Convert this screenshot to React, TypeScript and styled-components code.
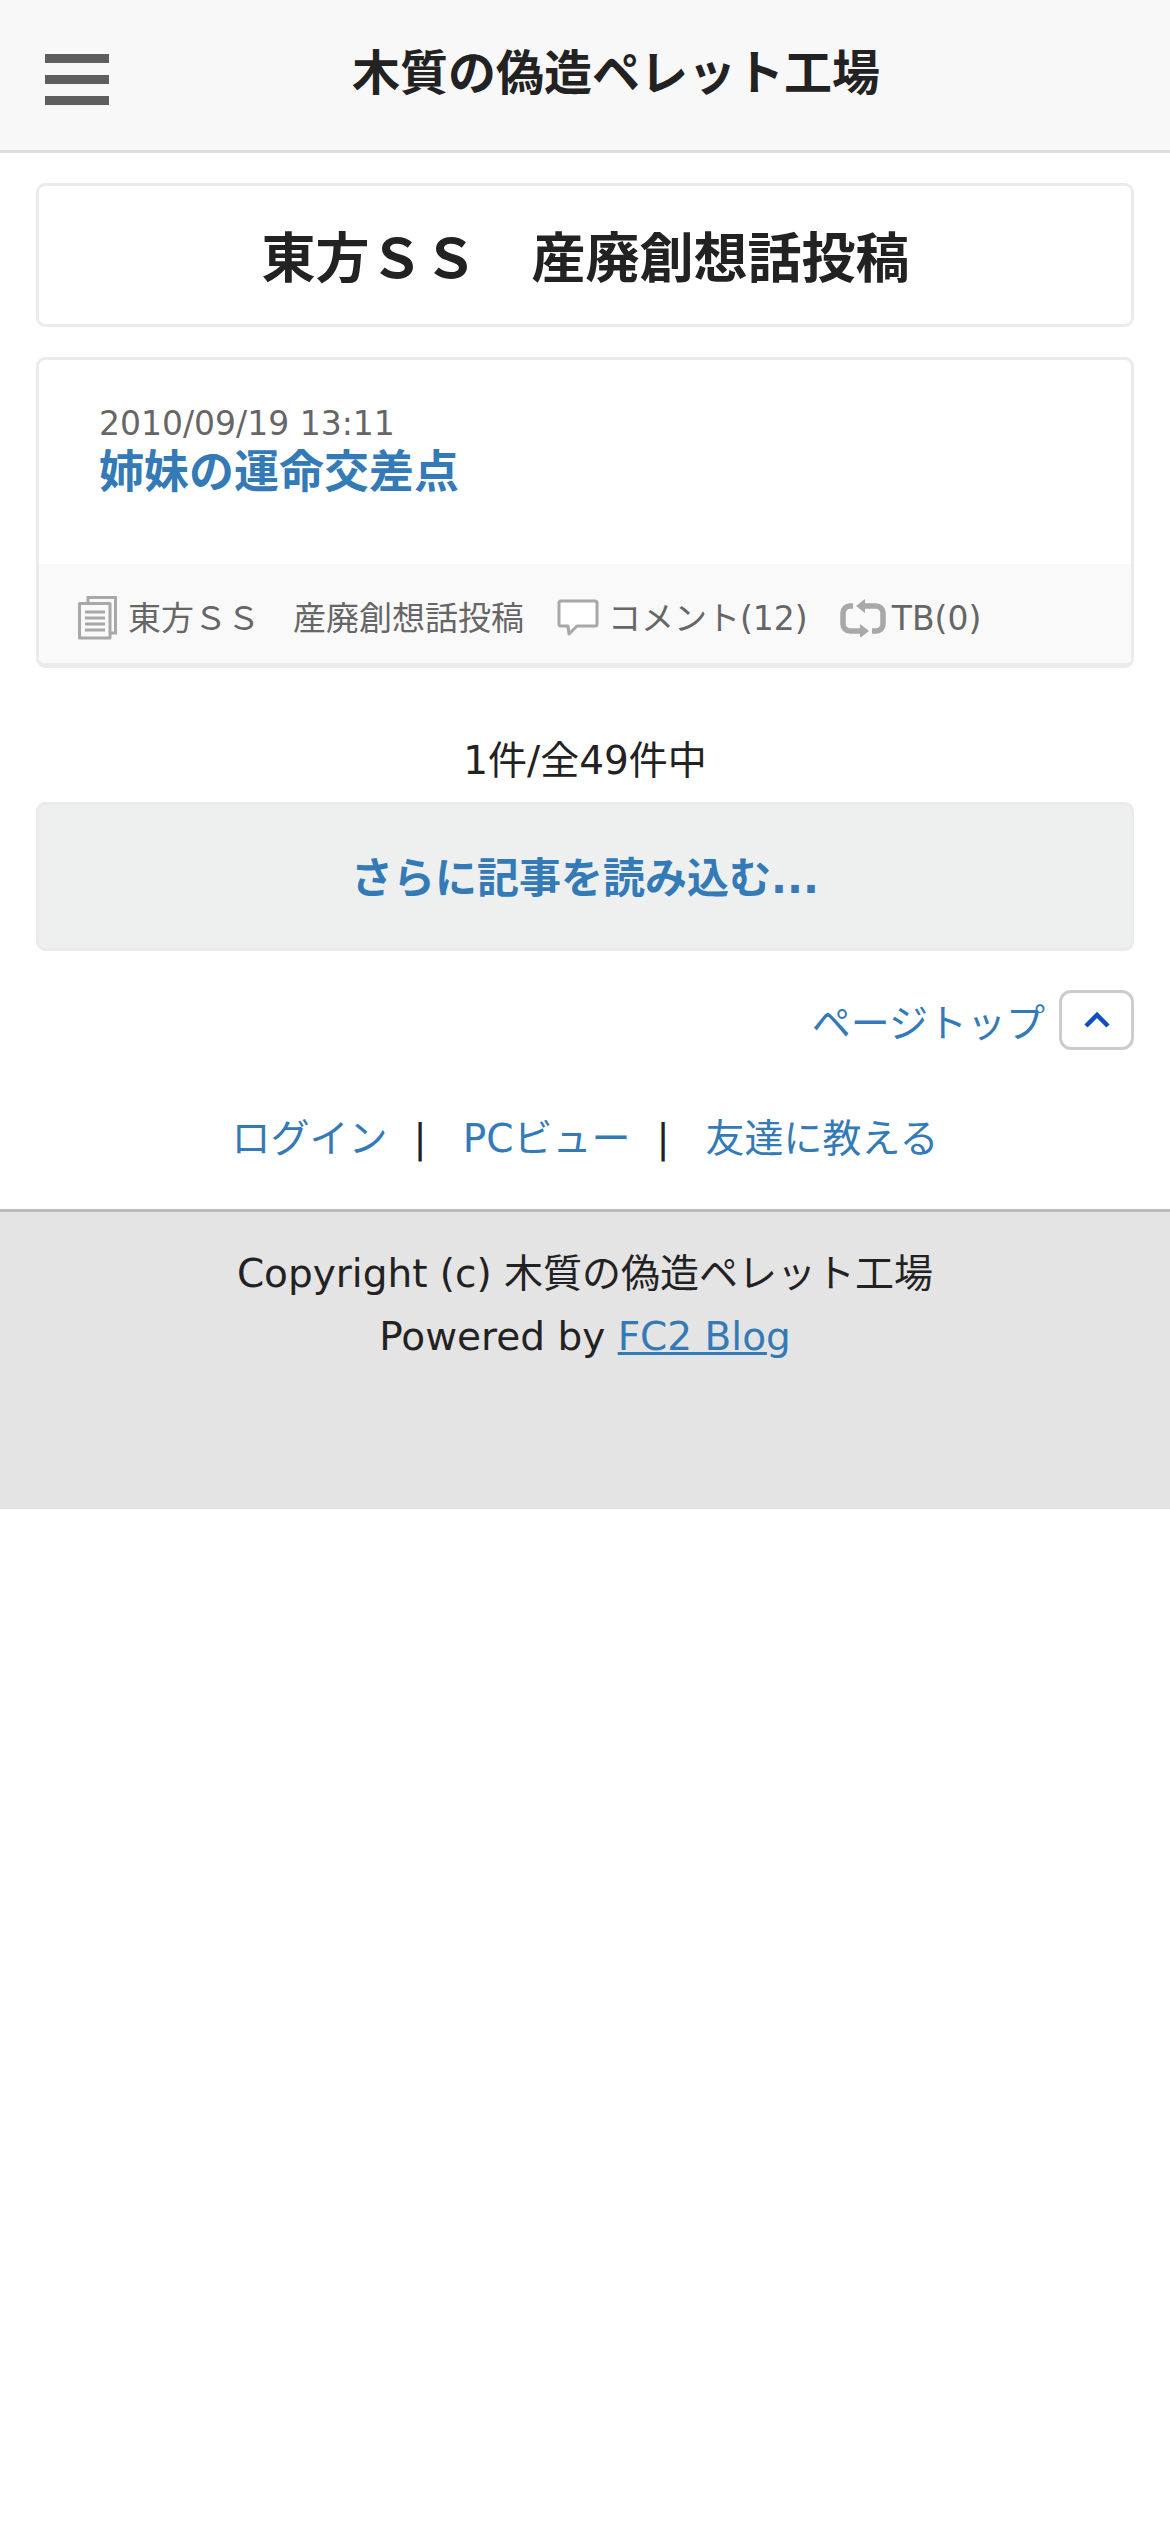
import React from "react";
import styled, { createGlobalStyle } from "styled-components";

const Global = createGlobalStyle`
  html, body { margin: 0; padding: 0; background: #fff; }
  body { font-family: "DejaVu Sans", "Noto Sans CJK JP", sans-serif; color: #222; }
  a { color: #337ab7; text-decoration: none; }
`;

const Page = styled.div`
  width: 1170px;
`;

const Header = styled.header`
  height: 150px;
  background: #f8f8f8;
  border-bottom: 3px solid #ddd;
  display: grid;
  grid-template-columns: 45px 64px 1fr 47px;
  align-items: center;
`;

const Burger = styled.div`
  grid-column: 2;
  display: flex;
  flex-direction: column;
  gap: 12px;
  margin-top: 9px;
  span { display: block; height: 9px; background: #5e5e5e; }
`;

const SiteTitle = styled.h1`
  grid-column: 3;
  margin: 0 0 4px;
  text-align: center;
  font-size: 48px;
  font-weight: 700;
  line-height: 66px;
`;

const Main = styled.main`
  padding: 30px 36px 0;
`;

const Card = styled.section`
  background: #fff;
  border: 3px solid #ebebeb;
  border-radius: 9px;
  box-sizing: border-box;
`;

const CategoryCard = styled(Card)`
  height: 144px;
  display: flex;
  align-items: center;
  justify-content: center;
`;

const CategoryTitle = styled.h2`
  margin: 10px 0 0 1px;
  font-size: 54px;
  font-weight: 700;
  line-height: 72px;
`;

const ArticleCard = styled(Card)`
  margin-top: 30px;
  height: 311px;
  overflow: hidden;
  display: flex;
  flex-direction: column;
  border-bottom-width: 5px;
`;

const ArticleBody = styled.div`
  height: 204px;
  padding: 44px 0 0 60px;
  box-sizing: border-box;
`;

const DateLine = styled.div`
  font-size: 33px;
  line-height: 39px;
  color: #666;
`;

const ArticleLink = styled.a`
  display: block;
  font-size: 45px;
  line-height: 54px;
  font-weight: 700;
  margin-top: 3px;
`;

const MetaBar = styled.div`
  flex: 1;
  background: #f9f9f9;
  display: flex;
  align-items: center;
  padding: 9px 0 0 39px;
  font-size: 33px;
  line-height: 45px;
  color: #666;
`;

const MetaItem = styled.span<{ $gap: number; $right: number }>`
  display: inline-flex;
  align-items: center;
  gap: ${(p) => p.$gap}px;
  margin-right: ${(p) => p.$right}px;
  white-space: nowrap;
`;

const Count = styled.div`
  margin-top: 64px;
  margin-bottom: 13px;
  text-align: center;
  font-size: 39px;
  line-height: 57px;
`;

const LoadMore = styled.a`
  display: block;
  height: 149px;
  box-sizing: border-box;
  background: #eef0f0;
  border: 3px solid #ebebeb;
  border-radius: 9px;
  text-align: center;
  font-size: 42px;
  font-weight: 700;
  line-height: 148px;
`;

const PageTopRow = styled.div`
  margin-top: 39px;
  display: flex;
  justify-content: flex-end;
  align-items: center;
  gap: 14px;
  font-size: 39px;
`;

const TopButton = styled.a`
  width: 75px;
  height: 60px;
  box-sizing: border-box;
  border: 3px solid #ccc;
  border-radius: 12px;
  display: flex;
  align-items: center;
  justify-content: center;
`;

const LinkRow = styled.nav`
  margin-top: 60px;
  display: flex;
  justify-content: center;
  font-size: 39px;
  line-height: 57px;
`;

const Sep = styled.span`
  margin: 0 36px 0 26px;
`;

const Footer = styled.footer`
  margin-top: 42px;
  height: 300px;
  box-sizing: border-box;
  background: #e4e4e4;
  border-top: 3px solid #bbb;
  padding-top: 30px;
  text-align: center;
  font-size: 39px;
  line-height: 63px;
  a { text-decoration: underline; }
`;

const DocIcon = () => (
  <svg width="39" height="44" viewBox="0 0 39 44" fill="none" stroke="#a8a8a8" strokeWidth="3">
    <path d="M10 6V1.500h27.500V37H32" />
    <path d="M1.500 7.500h30.500V42H1.500z" fill="#f9f9f9" strokeLinejoin="round" />
    <path d="M7 16h20M7 22h20M7 28h20M7 34h20" />
  </svg>
);

const BubbleIcon = () => (
  <svg width="42" height="38" viewBox="0 0 42 38" fill="none" stroke="#a8a8a8" strokeWidth="3">
    <path d="M4 2h34a2 2 0 0 1 2 2v21a2 2 0 0 1-2 2H20l-8 8-1-8H4a2 2 0 0 1-2-2V4a2 2 0 0 1 2-2z" strokeLinejoin="round" fill="#fff" />
  </svg>
);

const LoopIcon = () => (
  <svg width="46" height="38" viewBox="0 0 46 38" fill="none">
    <path d="M13 7h-3a7 7 0 0 0-7 7v11a7 7 0 0 0 7 7h12M24 7h12a7 7 0 0 1 7 7v11a7 7 0 0 1-7 7h-4" stroke="#a8a8a8" strokeWidth="5.500" />
    <path d="M25 0v14l-9-7zM20 25v14l9-7z" fill="#a8a8a8" />
  </svg>
);

const ChevronUp = () => (
  <svg width="28" height="18" viewBox="0 0 28 18" fill="none">
    <path d="M3 15L14 4l11 11" stroke="#0f4fc4" strokeWidth="4.500" />
  </svg>
);

export default function App() {
  return (
    <Page>
      <Global />
      <Header>
        <Burger><span /><span /><span /></Burger>
        <SiteTitle>木質の偽造ペレット工場</SiteTitle>
      </Header>
      <Main>
        <CategoryCard>
          <CategoryTitle>東方ＳＳ　産廃創想話投稿</CategoryTitle>
        </CategoryCard>
        <ArticleCard>
          <ArticleBody>
            <DateLine>2010/09/19 13:11</DateLine>
            <ArticleLink href="#">姉妹の運命交差点</ArticleLink>
          </ArticleBody>
          <MetaBar>
            <MetaItem $gap={11} $right={33}><DocIcon />東方ＳＳ　産廃創想話投稿</MetaItem>
            <MetaItem $gap={9} $right={32}><BubbleIcon />コメント(12)</MetaItem>
            <MetaItem $gap={6} $right={0}><LoopIcon />TB(0)</MetaItem>
          </MetaBar>
        </ArticleCard>
        <Count>1件/全49件中</Count>
        <LoadMore href="#">さらに記事を読み込む...</LoadMore>
        <PageTopRow>
          <a href="#">ページトップ</a>
          <TopButton href="#"><ChevronUp /></TopButton>
        </PageTopRow>
        <LinkRow>
          <a href="#">ログイン</a>
          <Sep>|</Sep>
          <a href="#">PCビュー</a>
          <Sep>|</Sep>
          <a href="#">友達に教える</a>
        </LinkRow>
      </Main>
      <Footer>
        <div>Copyright (c) 木質の偽造ペレット工場</div>
        <div>Powered by <a href="#">FC2 Blog</a></div>
      </Footer>
    </Page>
  );
}
